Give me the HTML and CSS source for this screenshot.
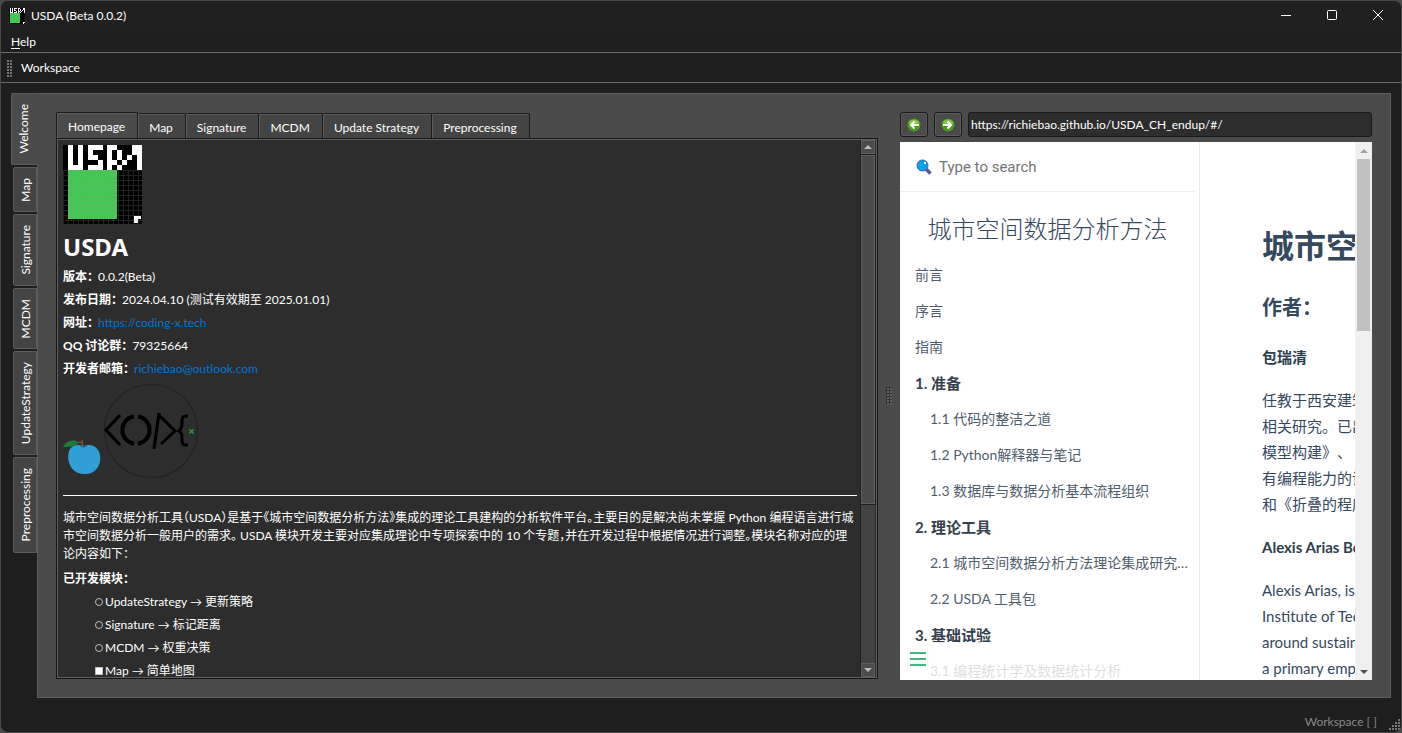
FILE: index.html
```html
<!DOCTYPE html>
<html lang="zh-CN">
<head>
  <meta charset="UTF-8">
  <meta name="viewport" content="width=device-width, initial-scale=1.0">
  <title>USDA (Beta 0.0.2)</title>
  <link rel="stylesheet" href="styles.css">
</head>
<body>

  <!-- Shared logo -->
  <svg class="defs" width="0" height="0">
    <symbol id="logo" viewBox="0 0 16 16">
      <rect width="16" height="16" fill="#000"/>
      <path d="M1 5h10v10H1z" fill="#40c850"/>
      <path d="M1 0h1v4h1V0h1v5H1zM5 0h3v1H6v1h1v1h1v2H5V4h2V3H5zM9 0h2v1h-1v4H9zM11 1h1v2h-1zM10 3h1v1h-1zM11 4h1v1h-1zM12 3h1v1h-1zM13 2h1v1h-1zM14 0h2v5h-1V2h-1z" fill="#fff"/>
      <path d="M14.4 14.4h1.4v.6h-.7v.8h-.7z" fill="#fff"/>
    </symbol>
  </svg>

  <div class="window">

    <!-- Title bar -->
    <header class="titlebar">
      <svg class="app-icon" shape-rendering="crispEdges"><use href="#logo"/></svg>
      <span class="app-title">USDA (Beta 0.0.2)</span>
      <div class="window-buttons">
        <button aria-label="Minimize"><svg width="12" height="12"><path d="M1 5.5h10"/></svg></button>
        <button aria-label="Maximize"><svg width="12" height="12"><rect x="1.5" y="0.5" width="9" height="9" rx="1"/></svg></button>
        <button aria-label="Close"><svg width="12" height="12"><path d="M1 0l10 10M11 0L1 10"/></svg></button>
      </div>
    </header>

    <nav class="menubar"><button><u>H</u>elp</button></nav>

    <div class="toolbar">
      <span class="grip"></span>
      <button>Workspace</button>
    </div>

    <main class="workspace">

      <div class="side-tabs">
        <button class="active"><span>Welcome</span></button>
        <button><span>Map</span></button>
        <button><span>Signature</span></button>
        <button><span>MCDM</span></button>
        <button><span>UpdateStrategy</span></button>
        <button><span>Preprocessing</span></button>
      </div>

      <div class="panel">

        <!-- Document -->
        <section class="doc">
          <div class="doc-tabs">
            <button class="active">Homepage</button>
            <button>Map</button>
            <button>Signature</button>
            <button>MCDM</button>
            <button>Update Strategy</button>
            <button>Preprocessing</button>
          </div>
          <div class="doc-frame">
            <div class="doc-body">
              <svg class="logo" shape-rendering="crispEdges" viewBox="0 0 79 79">
                <defs>
                  <pattern id="mesh" width="5" height="5" patternUnits="userSpaceOnUse">
                    <path d="M0 0h5v1H1v4H0z" fill="#999" fill-opacity=".22"/>
                  </pattern>
                </defs>
                <use href="#logo" width="79" height="79"/>
                <path d="M0 25h79v54H0z" fill="url(#mesh)"/>
              </svg>
              <h1>USDA</h1>
              <p class="info"><b>版本：</b> 0.0.2(Beta)</p>
              <p class="info"><b>发布日期：</b> 2024.04.10 (测试有效期至 2025.01.01)</p>
              <p class="info"><b>网址：</b> <a href="#">https://coding-x.tech</a></p>
              <p class="info"><b>QQ 讨论群：</b> 79325664</p>
              <p class="info"><b>开发者邮箱：</b> <a href="#">richiebao@outlook.com</a></p>
              <div class="brands">
                <svg width="40" height="40" viewBox="0 0 40 40">
                  <path d="M0 7C3 0 11-1 16 2 13 7 7 7 0 7z" fill="#1f7a3c"/>
                  <path d="M16 2l4 1M19 0l1 7" stroke="#7a4a2c" stroke-width="1.5" fill="none"/>
                  <path d="M21 6c-6-2-11-1-14 3-3 5-2 13 1 18 4 6 9 7 14 7s9-1 13-7c3-5 3-13 0-17-3-5-9-6-14-4z" fill="#2f9fd5"/>
                  <path d="M17 6q3 2 7 0M20 5l1 3" stroke="#25668c" fill="none"/>
                </svg>
                <svg width="96" height="96" viewBox="0 0 96 96">
                  <circle cx="48" cy="47" r="46.5" fill="none" stroke="#242424" stroke-width="1.5"/>
                  <g fill="none" stroke="#000" stroke-width="3">
                    <path d="M17 31L3 46l14 15"/>
                    <path d="M31 32.2a14 14 0 0 0 0 27.6M35 32.2a14 14 0 0 1 0 27.6" stroke-width="4"/>
                    <path d="M56 29l-5 36M56 29l1 6M58 33l14 14-14 13"/>
                    <path d="M85 32c-5 0-6 1-6 5 0 5 0 7-3 10 3 2 3 4 3 9s1 5 6 5"/>
                  </g>
                  <path d="M86.5 45.5l4 4M90.5 45.5l-4 4" stroke="#1f9c3c" stroke-width="1.5"/>
                </svg>
              </div>
              <hr>
              <p class="intro">城市空间数据分析工具（USDA）是基于《城市空间数据分析方法》集成的理论工具建构的分析软件平台。主要目的是解决尚未掌握 Python 编程语言进行城市空间数据分析一般用户的需求。 USDA 模块开发主要对应集成理论中专项探索中的 10 个专题，并在开发过程中根据情况进行调整。模块名称对应的理论内容如下：</p>
              <p class="info"><b>已开发模块：</b></p>
              <ul>
                <li>UpdateStrategy → 更新策略</li>
                <li>Signature → 标记距离</li>
                <li>MCDM → 权重决策</li>
                <li class="square">Map → 简单地图</li>
              </ul>
            </div>
            <div class="scrollbar dark">
              <span class="arrow up"></span>
              <span class="thumb"></span>
              <span class="arrow down"></span>
            </div>
          </div>
        </section>

        <div class="splitter"><span class="grip"></span></div>

        <!-- Browser -->
        <section class="browser">
          <form class="address">
            <button type="button" aria-label="Back">
              <svg width="14" height="14" viewBox="0 0 14 14"><circle cx="7" cy="7" r="6.5" fill="#4a9a1c"/><path d="M1.5 5a6 6 0 0 1 11 0q-5 3-11 0z" fill="#86c44a"/><path d="M12 7H4M7.5 3.5L4 7l3.5 3.5" fill="none" stroke="#fff" stroke-width="2.2"/></svg>
            </button>
            <button type="button" aria-label="Forward">
              <svg width="14" height="14" viewBox="0 0 14 14"><circle cx="7" cy="7" r="6.5" fill="#4a9a1c"/><path d="M1.5 5a6 6 0 0 1 11 0q-5 3-11 0z" fill="#86c44a"/><path d="M2 7h8M6.5 3.5L10 7l-3.5 3.5" fill="none" stroke="#fff" stroke-width="2.2"/></svg>
            </button>
            <input type="text" aria-label="Address" value="https://richiebao.github.io/USDA_CH_endup/#/">
          </form>

          <div class="page">
            <aside class="sidebar">
              <div class="search">
                <svg width="16" height="16" viewBox="0 0 16 16"><path d="M10 10l4.5 4.5" stroke="#5f5593" stroke-width="3.5"/><circle cx="6.5" cy="6.5" r="5.5" fill="#00a4ef" stroke="#4b5a9c"/><path d="M8 3h2v2H8z" fill="#fff"/></svg>
                <input type="search" aria-label="Search" placeholder="Type to search">
              </div>
              <h2>城市空间数据分析方法</h2>
              <ul>
                <li><a href="#">前言</a></li>
                <li><a href="#">序言</a></li>
                <li><a href="#">指南</a></li>
                <li class="chapter">1. 准备</li>
                <li class="sub"><a href="#">1.1 代码的整洁之道</a></li>
                <li class="sub"><a href="#">1.2 Python解释器与笔记</a></li>
                <li class="sub"><a href="#">1.3 数据库与数据分析基本流程组织</a></li>
                <li class="chapter">2. 理论工具</li>
                <li class="sub"><a href="#">2.1 城市空间数据分析方法理论集成研究…</a></li>
                <li class="sub"><a href="#">2.2 USDA 工具包</a></li>
                <li class="chapter">3. 基础试验</li>
                <li class="sub"><a href="#">3.1 编程统计学及数据统计分析</a></li>
              </ul>
              <button class="toggle" aria-label="Toggle sidebar"><span></span><span></span><span></span></button>
            </aside>
            <article>
              <h1>城市空</h1>
              <h2>作者：</h2>
              <p><b>包瑞清</b></p>
              <p>任教于西安建筑<br>相关研究。已出<br>模型构建》、<br>有编程能力的设<br>和《折叠的程序</p>
              <p><b>Alexis Arias Be</b></p>
              <p>Alexis Arias, is<br>Institute of Tec<br>around sustain<br>a primary emp</p>
            </article>
            <div class="scrollbar light">
              <span class="arrow up"></span>
              <span class="thumb"></span>
              <span class="arrow down"></span>
            </div>
          </div>
        </section>

      </div>
    </main>

    <footer class="statusbar">
      <span>Workspace [ ]</span>
      <svg width="12" height="12" fill="#777"><path d="M9 0h2v2H9zM6 3h2v2H6zM9 3h2v2H9zM3 6h2v2H3zM6 6h2v2H6zM9 6h2v2H9zM0 9h2v2H0zM3 9h2v2H3zM6 9h2v2H6zM9 9h2v2H9z"/></svg>
    </footer>
  </div>

</body>
</html>
```
FILE: styles.css
```css
* {
  margin: 0;
  padding: 0;
  box-sizing: border-box;
}

body {
  background: #4a4a48;
  color: #fff;
  font: 12px/18px Lato, "Noto Sans CJK SC", sans-serif;
}

button,
input {
  font: inherit;
  color: inherit;
  background: none;
  border: none;
}

ul {
  list-style: none;
}

.defs {
  position: absolute;
}

.window {
  display: flex;
  flex-direction: column;
  height: 100vh;
  overflow: hidden;
  background: #1e1e1e;
  border: 1px solid #484848;
  border-radius: 8px;
}

/* Title bar */
.titlebar {
  display: flex;
  align-items: center;
  height: 30px;
  padding-left: 8px;
  background: #202020;
}

.app-icon {
  width: 16px;
  height: 16px;
}

.app-title {
  flex: 1;
  margin-left: 6px;
}

.window-buttons {
  display: flex;
}

.window-buttons button {
  width: 46px;
  height: 28px;
}

.window-buttons svg {
  display: block;
  margin: auto;
  fill: none;
  stroke: #fff;
}

.menubar {
  height: 22px;
  padding: 2px 0 0 10px;
  border-bottom: 1px solid #6a6a6a;
}

.menubar u {
  text-underline-offset: 2px;
}

.toolbar {
  display: flex;
  align-items: center;
  height: 30px;
  padding-left: 5px;
  gap: 9px;
  border-bottom: 1px solid #6a6a6a;
}

.grip {
  width: 6px;
  height: 18px;
  background: linear-gradient(#1e1e1e 1px, transparent 1px) 0 0 / 3px 3px,
    linear-gradient(90deg, #1e1e1e 1px, #777 1px) 0 0 / 3px 3px;
}

/* Main area */
.workspace {
  flex: 1;
  display: flex;
  min-height: 0;
  padding: 10px 10px 0;
}

.side-tabs {
  display: flex;
  flex-direction: column;
  align-items: flex-end;
  gap: 2px;
  width: 26px;
}

.side-tabs button {
  width: 24px;
  padding: 10px 0 10px 3px;
  background: #444;
  border: 1px solid #5c5c5c;
  border-radius: 2px 0 0 2px;
}

.side-tabs .active {
  width: 27px;
  margin-right: -1px;
  background: #4b4b4b;
  border-right: none;
  z-index: 1;
}

.side-tabs span {
  display: block;
  line-height: 18px;
  writing-mode: vertical-rl;
  transform: rotate(180deg);
}

.panel {
  flex: 1;
  display: flex;
  min-width: 0;
  padding: 18px 18px 17px;
  background: #4b4b4b;
  border: 1px solid #5e5e5e;
}

.doc {
  flex: 1;
  display: flex;
  flex-direction: column;
  min-width: 0;
  margin-bottom: 1px;
}

.doc-tabs {
  display: flex;
  align-items: flex-end;
  height: 26px;
}

.doc-tabs button {
  height: 25px;
  padding: 3px 12px 0 11px;
  background: #444;
  border: 1px solid #1a1a1a;
  border-left: none;
  border-bottom: none;
  border-radius: 2px 2px 0 0;
  box-shadow: inset 1px 1px #5c5c5c;
}

.doc-tabs .active {
  height: 26px;
  background: #4b4b4b;
  border-left: 1px solid #1a1a1a;
}

.doc-frame {
  flex: 1;
  display: flex;
  min-height: 0;
  background: #2d2d2d;
  border: 1px solid #151515;
  box-shadow: inset 0 0 0 1px #606060;
  padding: 1px;
}

.doc-body {
  flex: 1;
  padding: 5px 3px 0 5px;
  overflow: hidden;
  font-feature-settings: "halt";
}

.logo {
  display: block;
  width: 79px;
  height: 79px;
}

.doc-body h1 {
  margin: 8px 0 3px;
  font: 700 24px/30px "Noto Sans", sans-serif;
}

.doc-body a {
  color: #0078d4;
  text-decoration: none;
}

.info {
  line-height: 23px;
}

.info b {
  margin-right: 2px;
}

.brands {
  display: flex;
  align-items: flex-end;
  margin-top: 4px;
}

hr {
  margin: 15px 0 13px;
  border: none;
  border-top: 1px solid #fff;
}

.intro {
  margin-bottom: 4px;
}

.doc-body li {
  display: flex;
  align-items: center;
  gap: 2px;
  padding-left: 32px;
  line-height: 23px;
}

.doc-body li::before {
  content: "";
  width: 6px;
  height: 6px;
  border: 1px solid #bbb;
  border-radius: 50%;
}

.doc-body li.square::before {
  background: #fff;
  border-radius: 0;
}

.splitter {
  display: flex;
  align-items: center;
  justify-content: center;
  width: 22px;
}

.splitter .grip {
  opacity: 0.5;
}

/* Scrollbars */
.scrollbar {
  display: flex;
  flex-direction: column;
}

.scrollbar .arrow {
  display: grid;
  place-items: center;
}

.arrow::before {
  content: "";
  border: 4px solid transparent;
}

.arrow.up::before {
  border-top: none;
  border-bottom-color: currentColor;
}

.arrow.down {
  margin-top: auto;
}

.arrow.down::before {
  border-bottom: none;
  border-top-color: currentColor;
}

.dark {
  width: 15px;
  margin-right: 1px;
  background: #424242;
  border-left: 1px solid #1e1e1e;
  color: #bbb;
}

.dark .arrow,
.dark .thumb {
  border: 1px solid #606060;
  background: #4b4b4b;
}

.dark .arrow {
  height: 14px;
}

.dark .thumb {
  height: 65%;
  margin-top: 1px;
  outline: 1px solid #1e1e1e;
}

.light {
  width: 17px;
  background: #f0f0f0;
  color: #505050;
}

.light .arrow {
  height: 17px;
}

.light .up {
  color: #a3a3a3;
}

.light .thumb {
  height: 32%;
  margin: 0 2px;
  background: #c1c1c1;
}

/* Browser */
.browser {
  display: flex;
  flex-direction: column;
  width: 472px;
}

.address {
  display: flex;
  gap: 6px;
  margin-bottom: 5px;
}

.address button,
.address input {
  height: 25px;
  border: 1px solid #1a1a1a;
  border-radius: 3px;
}

.address button {
  width: 28px;
  background: #4b4b4b;
  box-shadow: inset 0 0 0 1px #5c5c5c;
}

.address svg {
  display: block;
  margin: auto;
}

.address input {
  flex: 1;
  padding: 0 2px;
  background: #2d2d2d;
}

.page {
  flex: 1;
  display: flex;
  min-height: 0;
  background: #fff;
  color: #34495e;
  overflow: hidden;
  text-spacing-trim: space-all;
}

.sidebar {
  position: relative;
  flex: none;
  width: 300px;
  overflow: hidden;
  border-right: 1px solid #eaeaea;
}

.search {
  display: flex;
  align-items: center;
  height: 50px;
  margin-right: 4px;
  padding-left: 16px;
  gap: 7px;
  border-bottom: 1px solid #eee;
}

.search input {
  flex: 1;
  font: 15px Roboto, sans-serif;
}

.search input::placeholder {
  color: #757575;
}

.sidebar h2 {
  margin: 17px 0 15px;
  padding-right: 4px;
  font: 300 24px/38px "Noto Sans CJK SC", sans-serif;
  text-align: center;
}

.sidebar ul {
  padding: 0 7px 0 15px;
  font-size: 14px;
}

.sidebar li {
  height: 36px;
  line-height: 26px;
  white-space: nowrap;
  color: #505d6b;
}

.sidebar a {
  color: #505d6b;
  text-decoration: none;
}

.sidebar .sub {
  padding-left: 15px;
}

.sidebar .chapter {
  font-size: 15px;
  font-weight: 700;
  color: #34404c;
}

.toggle {
  position: absolute;
  left: 0;
  bottom: 0;
  display: flex;
  flex-direction: column;
  gap: 4px;
  width: 284px;
  height: 38px;
  padding: 10px;
  background: rgba(255, 255, 255, 0.8);
}

.toggle span {
  width: 16px;
  height: 2px;
  background: #42b983;
}

article {
  flex: 1;
  min-width: 0;
  padding: 82px 0 0 62px;
  overflow: hidden;
  white-space: nowrap;
  font-size: 15px;
  line-height: 26px;
}

article h1 {
  font-size: 32px;
  line-height: 44px;
  margin-bottom: 24px;
}

article h2 {
  font-size: 20px;
  line-height: 30px;
  margin-bottom: 22px;
}

article p {
  margin-bottom: 17px;
}

article b {
  color: #2c3e50;
}

.statusbar {
  display: flex;
  align-items: flex-end;
  justify-content: flex-end;
  gap: 12px;
  height: 34px;
  padding-bottom: 1px;
  color: #888;
}
```
